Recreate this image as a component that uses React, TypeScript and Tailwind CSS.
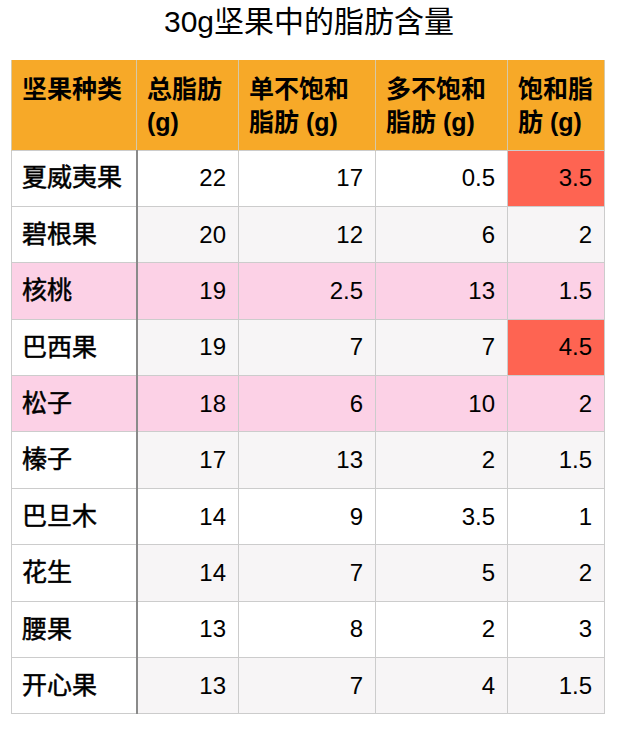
const rows: { name: string; v: string[]; pink?: boolean; red?: boolean }[] = [
  { name: "夏威夷果", v: ["22", "17", "0.5", "3.5"], red: true },
  { name: "碧根果", v: ["20", "12", "6", "2"] },
  { name: "核桃", v: ["19", "2.5", "13", "1.5"], pink: true },
  { name: "巴西果", v: ["19", "7", "7", "4.5"], red: true },
  { name: "松子", v: ["18", "6", "10", "2"], pink: true },
  { name: "榛子", v: ["17", "13", "2", "1.5"] },
  { name: "巴旦木", v: ["14", "9", "3.5", "1"] },
  { name: "花生", v: ["14", "7", "5", "2"] },
  { name: "腰果", v: ["13", "8", "2", "3"] },
  { name: "开心果", v: ["13", "7", "4", "1.5"] },
];

const headers = [
  ["坚果种类"],
  ["总脂肪", "(g)"],
  ["单不饱和", "脂肪 (g)"],
  ["多不饱和", "脂肪 (g)"],
  ["饱和脂", "肪 (g)"],
];

export default function App() {
  return (
    <div
      className="w-[618px] h-[732px] bg-white text-black"
      style={{ fontFamily: '"Liberation Sans", "Noto Sans CJK SC", sans-serif' }}
    >
      <h1 className="h-[60px] pt-[2px] text-center text-[30px] leading-[40px] font-normal">30g坚果中的脂肪含量</h1>
      <table className="ml-[11px] w-[593px] table-fixed border-collapse">
        <colgroup>
          <col className="w-[125px]" />
          <col className="w-[102px]" />
          <col className="w-[137px]" />
          <col className="w-[132px]" />
          <col className="w-[97px]" />
        </colgroup>
        <thead>
          <tr className="bg-[#f7a928] border-b border-b-[#9a8c70]">
            {headers.map((h, i) => (
              <th
                key={i}
                className="h-[90px] pl-[10px] pr-[4px] pt-[13px] pb-[10px] text-left align-top text-[25px] leading-[33px] font-bold border-x border-[#d6c9a8]"
              >
                {h.map((line, j) => (
                  <div key={j} className="whitespace-nowrap">{line}</div>
                ))}
              </th>
            ))}
          </tr>
        </thead>
        <tbody>
          {rows.map((r, i) => {
            const base = r.pink ? "bg-[#fcd1e6]" : i % 2 === 1 ? "bg-[#f7f5f6]" : "bg-white";
            return (
              <tr key={r.name} className="h-[56.4px]">
                <td
                  className={`pl-[10px] text-[25px] font-normal [-webkit-text-stroke:0.5px_#000] border border-[#cccccc] border-r-2 border-r-[#8a8a8a] ${
                    r.pink ? "bg-[#fcd1e6]" : "bg-white"
                  }`}
                >
                  {r.name}
                </td>
                {r.v.map((val, j) => (
                  <td
                    key={j}
                    className={`pr-[12px] text-right text-[24px] border border-[#cccccc] ${
                      j === 3 && r.red ? "bg-[#fe6452]" : base
                    }`}
                  >
                    {val}
                  </td>
                ))}
              </tr>
            );
          })}
        </tbody>
      </table>
    </div>
  );
}
